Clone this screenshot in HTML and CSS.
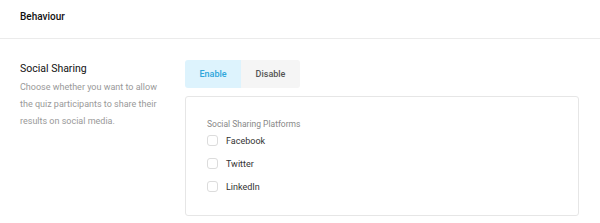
FILE: index.html
```html
<!DOCTYPE html>
<html lang="en">
<head>
    <meta charset="UTF-8">
    <title>Behaviour</title>
    <link rel="stylesheet" href="styles.css">
</head>
<body>
    <div class="header">Behaviour</div>
    <div class="setting">
        <div class="setting-info">
            <div class="setting-title">Social Sharing</div>
            <div class="setting-desc">Choose whether you want to allow the quiz participants to share their results on social media.</div>
        </div>
        <div class="setting-control">
            <div class="toggle">
                <button type="button" class="toggle-btn active">Enable</button>
                <button type="button" class="toggle-btn">Disable</button>
            </div>
            <div class="panel">
                <div class="panel-label">Social Sharing Platforms</div>
                <label class="check"><span class="box"></span>Facebook</label>
                <label class="check"><span class="box"></span>Twitter</label>
                <label class="check"><span class="box"></span>LinkedIn</label>
            </div>
        </div>
    </div>
</body>
</html>
```

FILE: styles.css
```css
body {
    font-family: Roboto, "Liberation Sans", Arial, sans-serif;
    background-color: white;
    color: #222;
    margin: 0;
    padding: 0;
}
.header {
    height: 38px;
    line-height: 33px;
    padding: 0 20px;
    font-size: 10px;
    font-weight: 500;
    color: #111;
    border-bottom: 1px solid #ebebeb;
}
.setting {
    display: flex;
    padding: 21px 21px 0 20px;
}
.setting-info {
    width: 165px;
    flex-shrink: 0;
}
.setting-title {
    font-size: 10.5px;
    color: #111;
    line-height: 17px;
}
.setting-desc {
    font-size: 9px;
    line-height: 17px;
    color: #999;
    margin-top: 2px;
    padding-right: 20px;
}
.setting-control {
    flex: 1;
}
.toggle {
    display: flex;
}
.toggle-btn {
    font-family: inherit;
    font-size: 9px;
    font-weight: 500;
    height: 28px;
    border: none;
    background-color: #f5f5f5;
    color: #555;
    padding: 0;
    width: 59px;
    border-radius: 0 3px 3px 0;
}
.toggle-btn.active {
    width: 56px;
    background-color: #ddf3fd;
    color: #2ea6db;
    border-radius: 3px 0 0 3px;
}
.panel {
    margin-top: 8px;
    height: 120px;
    box-sizing: border-box;
    border: 1px solid #e6e6e6;
    border-radius: 3px;
    padding: 22px 21px 0;
}
.panel-label {
    font-size: 8.5px;
    color: #888;
    line-height: 11px;
    margin-bottom: -1px;
}
.check {
    display: flex;
    align-items: center;
    height: 23px;
    font-size: 9px;
    color: #333;
}
.box {
    width: 11px;
    height: 11px;
    box-sizing: border-box;
    border: 1px solid #dcdcdc;
    border-radius: 3px;
    margin-right: 8px;
}
```
